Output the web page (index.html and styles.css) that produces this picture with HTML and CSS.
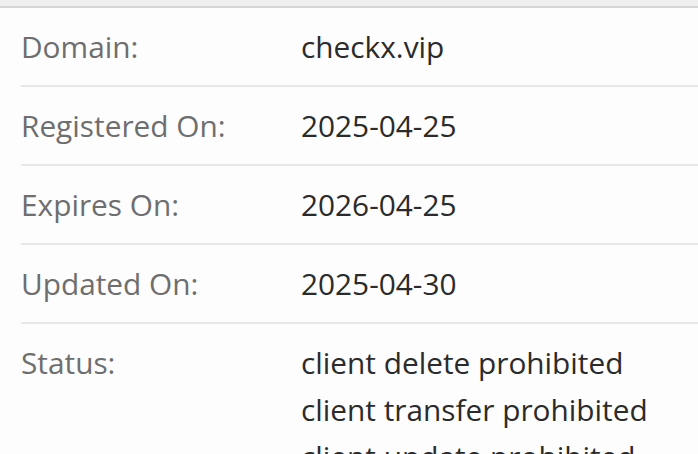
FILE: index.html
```html
<!DOCTYPE html>
<html lang="en">
<head>
    <meta charset="UTF-8">
    <meta name="viewport" content="width=device-width, initial-scale=1.0">
    <title>checkx.vip - Whois</title>
    <link rel="stylesheet" href="styles.css">
</head>
<body>
    <div class="top-bar"></div>
    <div class="whois">
        <div class="row">
            <div class="label">Domain:</div>
            <div class="value">checkx.vip</div>
        </div>
        <div class="row">
            <div class="label">Registered On:</div>
            <div class="value">2025-04-25</div>
        </div>
        <div class="row">
            <div class="label">Expires On:</div>
            <div class="value">2026-04-25</div>
        </div>
        <div class="row">
            <div class="label">Updated On:</div>
            <div class="value">2025-04-30</div>
        </div>
        <div class="row">
            <div class="label">Status:</div>
            <div class="value">
                client delete prohibited<br>
                client transfer prohibited<br>
                client update prohibited
            </div>
        </div>
    </div>
</body>
</html>
```

FILE: styles.css
```css
body { margin: 0; font-family: "Open Sans", "Noto Sans", sans-serif; background: #fdfdfd; color: #2b2b2b; overflow: hidden; }
.top-bar { height: 6px; background: #efefef; border-bottom: 2px solid #d5d5d5; }
.whois { padding-left: 21px; }
.row {
    display: flex;
    padding: 15px 0;
    border-bottom: 2px solid #e8e8e8;
    font-size: 29.8px;
    line-height: 47px;
}
.label { width: 280px; flex-shrink: 0; color: #6e6e6e; }
.value { color: #2b2b2b; white-space: nowrap; }
```
